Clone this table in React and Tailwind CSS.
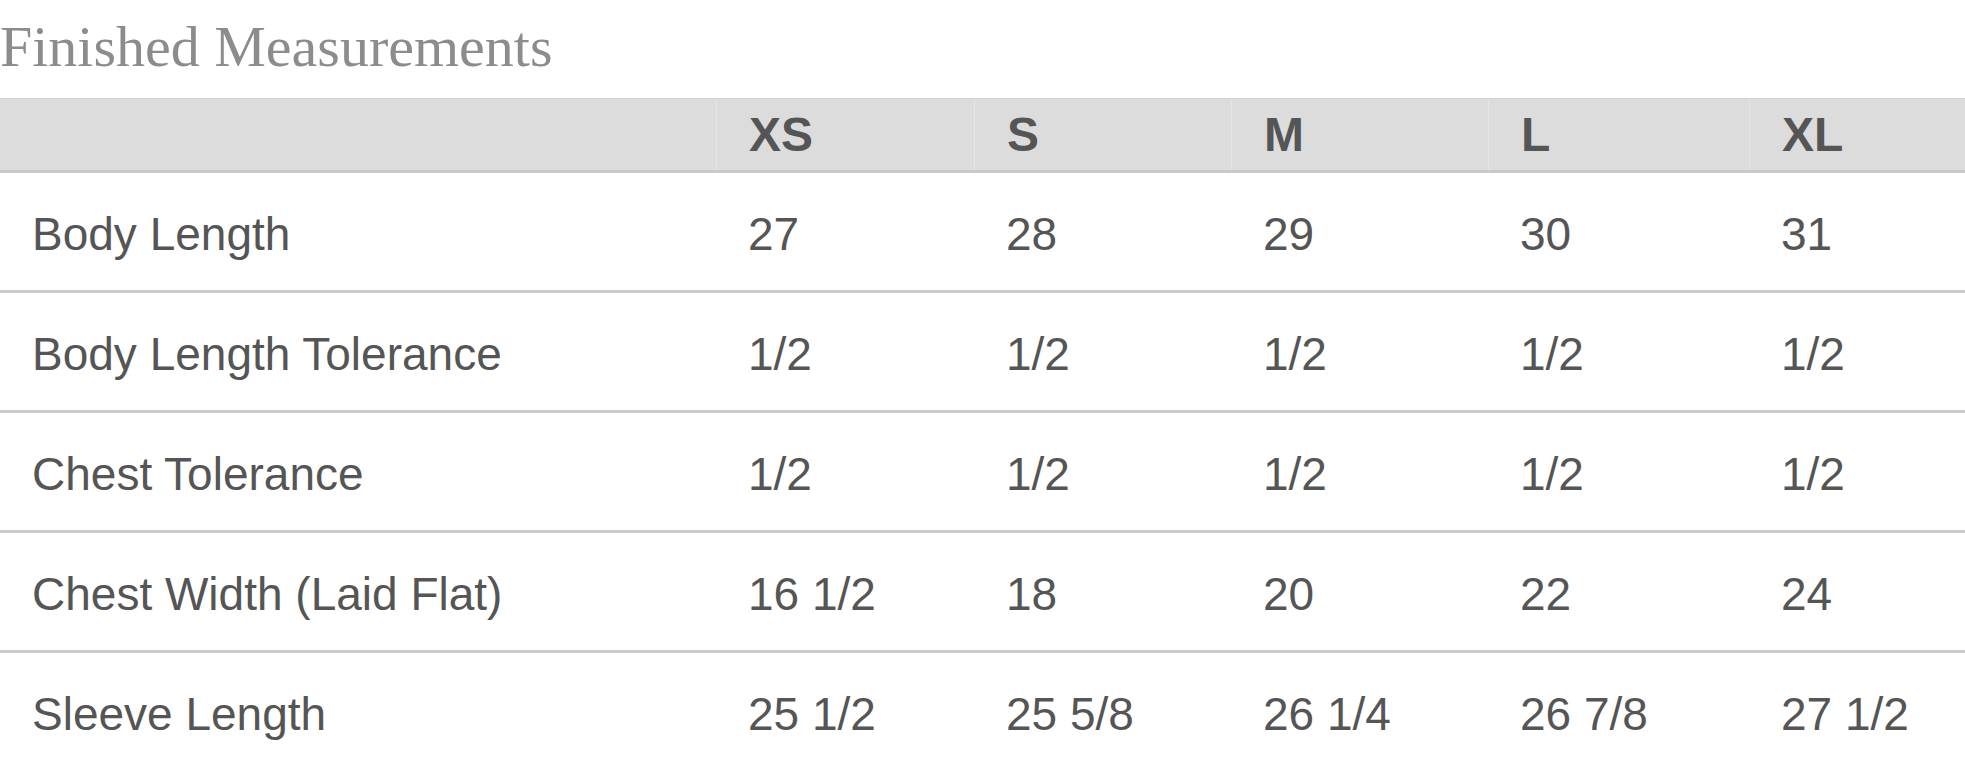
const SIZES = ['XS', 'S', 'M', 'L', 'XL'];

const ROWS = [
  { label: 'Body Length', values: ['27', '28', '29', '30', '31'] },
  { label: 'Body Length Tolerance', values: ['1/2', '1/2', '1/2', '1/2', '1/2'] },
  { label: 'Chest Tolerance', values: ['1/2', '1/2', '1/2', '1/2', '1/2'] },
  { label: 'Chest Width (Laid Flat)', values: ['16 1/2', '18', '20', '22', '24'] },
  { label: 'Sleeve Length', values: ['25 1/2', '25 5/8', '26 1/4', '26 7/8', '27 1/2'] },
];

// widths of the five size columns, the label column is 716px and XL takes the rest
const WIDTHS = ['w-[258px]', 'w-[257px]', 'w-[257px]', 'w-[261px]', 'flex-1'];

export default function App() {
  return (
    <div className="w-[1965px] h-[760px] overflow-hidden bg-white">
      <h1
        className="h-[98px] pt-[18px] text-[58px] leading-none font-normal text-[#8c8c8c]"
        style={{ fontFamily: '"Liberation Serif", "Times New Roman", serif' }}
      >
        Finished Measurements
      </h1>

      <div className="text-[#555555]" style={{ fontFamily: '"Liberation Sans", Arial, sans-serif' }}>
        <div className="flex h-[75px] bg-[#dcdcdc] border-t border-[#d2d2d2] border-b-[3px] border-b-[#c9c9c9]">
          <div className="w-[716px] shrink-0" />
          {SIZES.map((s, i) => (
            <div
              key={s}
              className={`${WIDTHS[i]} shrink-0 flex items-center pl-[32px] border-l border-[#e6e6e6] text-[48px] font-bold leading-none`}
            >
              {s}
            </div>
          ))}
        </div>

        {ROWS.map(({ label, values }) => (
          <div key={label} className="flex h-[120px] border-b-[3px] border-[#cbcbcb] text-[46px] leading-none">
            <div className="w-[716px] shrink-0 flex items-center pl-[32px] pt-[5px]">{label}</div>
            {values.map((v, i) => (
              <div key={i} className={`${WIDTHS[i]} shrink-0 flex items-center pl-[32px] pt-[5px]`}>
                {v}
              </div>
            ))}
          </div>
        ))}
      </div>
    </div>
  );
}
